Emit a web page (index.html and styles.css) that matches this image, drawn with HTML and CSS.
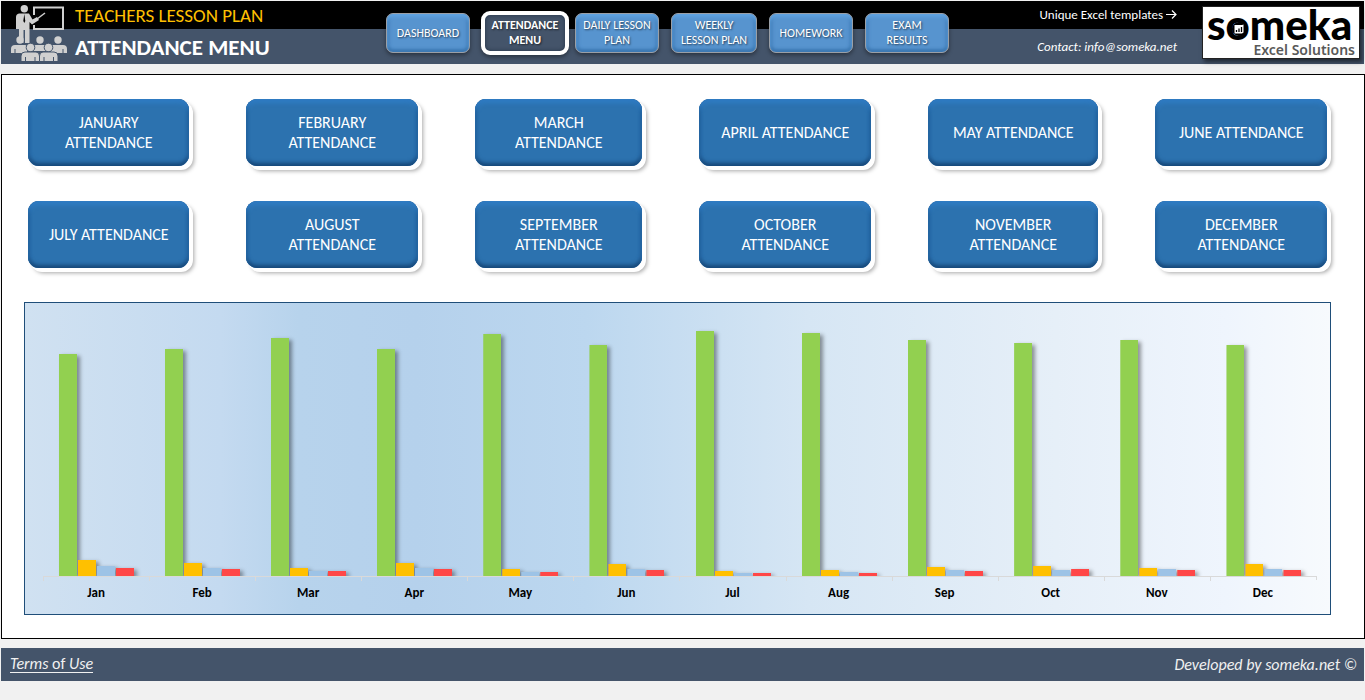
FILE: index.html
```html
<!DOCTYPE html>
<html lang="en">
  <head>
    <meta charset="UTF-8" />
    <title>Teachers Lesson Plan - Attendance Menu</title>
    <link rel="stylesheet" href="styles.css">
  </head>
  <body>
    <header class="header">
      <div class="brand">
        <svg class="brand-icon" viewBox="0 0 56 57" aria-hidden="true">
          <path d="M23 10V2.500H52V24H23V20" fill="none" stroke="#d0d0d0" stroke-width="2" />
          <path d="M26 14L34 8" stroke="#d0d0d0" stroke-width="1.500" />
          <circle cx="13.300" cy="3.700" r="3.700" />
          <path d="M8 8.500H18L21.500 14.500L26 12L28 15L21 19.500L18.500 17V38H14V25H12.500V38H8V24H5V12Q5 9 8 8.500Z" />
          <path d="M13.300 9L12.300 16L13.300 18L14.300 16Z" fill="#000" />
          <circle cx="9" cy="35" r="3.700" />
          <circle cx="29" cy="35" r="3.700" />
          <circle cx="47" cy="35" r="3.700" />
          <path d="M0 48V44Q0 40 4 40H14Q16 40 16 43V48Z" />
          <path d="M22 46V43Q22 40 25 40H33Q36 40 36 43V46Z" />
          <path d="M40 48V43Q40 40 42 40H52Q56 40 56 44V48Z" />
          <g stroke="#44546a" stroke-width="1">
            <circle cx="19.500" cy="42.500" r="4.300" />
            <circle cx="37.500" cy="42.500" r="4.300" />
            <path d="M10 56.500V51Q10 47 14 47H25Q28.500 47 28.500 51V56.500Z" />
            <path d="M28.500 56.500V51Q28.500 47 32 47H43Q47 47 47 51V56.500Z" />
            <path d="M14.500 52V56M24 52V56M33 52V56M42.500 52V56M4 44V48M52 44V48" />
          </g>
        </svg>
        <div class="titles">
          <div class="product">TEACHERS LESSON PLAN</div>
          <h1>ATTENDANCE MENU</h1>
        </div>
      </div>

      <nav class="nav">
        <a class="nav-button" href="#dashboard">DASHBOARD</a>
        <a class="nav-button active" href="#attendance">ATTENDANCE MENU</a>
        <a class="nav-button" href="#daily">DAILY LESSON PLAN</a>
        <a class="nav-button wide" href="#weekly">WEEKLY LESSON PLAN</a>
        <a class="nav-button" href="#homework">HOMEWORK</a>
        <a class="nav-button" href="#exams">EXAM RESULTS</a>
      </nav>

      <div class="contact">
        <a class="templates" href="#templates">Unique Excel templates
          <svg class="arrow" viewBox="0 0 11 9" aria-hidden="true"><path d="M0 4.500H10M6 .5L10 4.500L6 8.500" /></svg>
        </a>
        <a class="mail" href="#contact">Contact: info@someka.net</a>
      </div>

      <a class="logo" href="#someka">
        <span class="logo-name">s<span class="logo-o">o<svg viewBox="0 0 14 14" aria-hidden="true">
          <circle cx="7" cy="7" r="7" fill="#000" />
          <path d="M2.500 3H10L11.500 2.500V10.500L10 11.500H2.500Z" fill="#fff" />
          <path d="M4.500 10V8M7 10V6.500M9.500 10V5" stroke="#000" stroke-width="1.300" />
        </svg></span>meka</span>
        <span class="logo-sub">Excel Solutions</span>
      </a>
    </header>

    <main class="panel">
      <div class="months">
        <button class="month-button">JANUARY ATTENDANCE</button>
        <button class="month-button">FEBRUARY ATTENDANCE</button>
        <button class="month-button">MARCH ATTENDANCE</button>
        <button class="month-button">APRIL ATTENDANCE</button>
        <button class="month-button">MAY ATTENDANCE</button>
        <button class="month-button">JUNE ATTENDANCE</button>
        <button class="month-button">JULY ATTENDANCE</button>
        <button class="month-button">AUGUST ATTENDANCE</button>
        <button class="month-button">SEPTEMBER ATTENDANCE</button>
        <button class="month-button">OCTOBER ATTENDANCE</button>
        <button class="month-button">NOVEMBER ATTENDANCE</button>
        <button class="month-button">DECEMBER ATTENDANCE</button>
      </div>

      <div class="chart">
        <div class="plot">
          <div class="group"><i class="green" style="height: 222px"></i><i class="yellow" style="height: 16px"></i><i class="blue" style="height: 10px"></i><i class="red" style="height: 8px"></i></div>
          <div class="group"><i class="green" style="height: 227px"></i><i class="yellow" style="height: 13px"></i><i class="blue" style="height: 8px"></i><i class="red" style="height: 7px"></i></div>
          <div class="group"><i class="green" style="height: 238px"></i><i class="yellow" style="height: 8px"></i><i class="blue" style="height: 5px"></i><i class="red" style="height: 5px"></i></div>
          <div class="group"><i class="green" style="height: 227px"></i><i class="yellow" style="height: 13px"></i><i class="blue" style="height: 8px"></i><i class="red" style="height: 7px"></i></div>
          <div class="group"><i class="green" style="height: 242px"></i><i class="yellow" style="height: 7px"></i><i class="blue" style="height: 4px"></i><i class="red" style="height: 4px"></i></div>
          <div class="group"><i class="green" style="height: 231px"></i><i class="yellow" style="height: 12px"></i><i class="blue" style="height: 7px"></i><i class="red" style="height: 6px"></i></div>
          <div class="group"><i class="green" style="height: 245px"></i><i class="yellow" style="height: 5px"></i><i class="blue" style="height: 3px"></i><i class="red" style="height: 3px"></i></div>
          <div class="group"><i class="green" style="height: 243px"></i><i class="yellow" style="height: 6px"></i><i class="blue" style="height: 4px"></i><i class="red" style="height: 3px"></i></div>
          <div class="group"><i class="green" style="height: 236px"></i><i class="yellow" style="height: 9px"></i><i class="blue" style="height: 6px"></i><i class="red" style="height: 5px"></i></div>
          <div class="group"><i class="green" style="height: 233px"></i><i class="yellow" style="height: 10px"></i><i class="blue" style="height: 6px"></i><i class="red" style="height: 7px"></i></div>
          <div class="group"><i class="green" style="height: 236px"></i><i class="yellow" style="height: 8px"></i><i class="blue" style="height: 7px"></i><i class="red" style="height: 6px"></i></div>
          <div class="group"><i class="green" style="height: 231px"></i><i class="yellow" style="height: 12px"></i><i class="blue" style="height: 7px"></i><i class="red" style="height: 6px"></i></div>
        </div>
        <div class="labels">
          <span>Jan</span>
          <span>Feb</span>
          <span>Mar</span>
          <span>Apr</span>
          <span>May</span>
          <span>Jun</span>
          <span>Jul</span>
          <span>Aug</span>
          <span>Sep</span>
          <span>Oct</span>
          <span>Nov</span>
          <span>Dec</span>
        </div>
      </div>
    </main>

    <footer class="footer">
      <a class="terms" href="#terms"><em>Terms</em> of <em>Use</em></a>
      <em>Developed by someka.net ©</em>
    </footer>
  </body>
</html>
```

FILE: styles.css
```css
* {
  box-sizing: border-box;
}

body {
  margin: 0;
  padding: 1px 0 0 1px;
  background: #f1f1f1;
  font-family: Carlito, Lato, sans-serif;
}

a {
  color: white;
  text-decoration: none;
}

.header {
  display: flex;
  height: 63px;
  margin-right: 1px;
  background: linear-gradient(#000 28px, #44546a 28px);
}

.brand {
  display: flex;
  flex: 0 0 385px;
  padding: 4px 0 0 10px;
}

.brand-icon {
  width: 56px;
  height: 57px;
  fill: #d0d0d0;
}

.titles {
  margin-left: 8px;
  white-space: nowrap;
}

.product {
  color: #ffc000;
  font-size: 19px;
  line-height: 22px;
}

h1 {
  margin: 6px 0 0;
  color: white;
  font-size: 23px;
  line-height: 28px;
}

.nav {
  display: flex;
  align-items: flex-start;
  gap: 12px;
  padding-top: 12px;
}

.nav-button {
  display: flex;
  align-items: center;
  justify-content: center;
  width: 84px;
  height: 40px;
  padding: 0 6px;
  border: 1px solid #9a9fa6;
  border-radius: 7px;
  background: #5794cf;
  box-shadow: inset 0 3px 3px #5fa2e0, inset 0 -3px 3px #3d79b3,
    inset 3px 0 3px #4a86c0, inset -3px 0 3px #4a86c0,
    0 2px 4px rgba(0, 0, 0, 0.4);
  font-size: 12px;
  line-height: 15px;
  text-align: center;
  text-shadow: 1px 1px 2px rgba(0, 0, 0, 0.6);
}

.nav-button.wide {
  width: 86px;
}

.nav-button.active {
  width: 88px;
  height: 44px;
  margin: -2px -6px 0 -1px;
  padding: 0 4px;
  border: 4px solid white;
  border-radius: 9px;
  background: #44546a;
  box-shadow: inset 0 0 4px #263448, 0 2px 4px rgba(0, 0, 0, 0.4);
  font-weight: bold;
}

.contact {
  display: flex;
  flex-direction: column;
  align-items: flex-end;
  margin-left: auto;
  font-size: 13px;
  line-height: 28px;
  white-space: nowrap;
}

.mail {
  margin-top: 4px;
  font-style: italic;
}

.arrow {
  width: 11px;
  height: 9px;
  fill: none;
  stroke: white;
  stroke-width: 1.2;
}

.logo {
  display: flex;
  flex-direction: column;
  width: 158px;
  height: 53px;
  margin: 5px 4px 0 25px;
  padding: 0 4px;
  border: 1px solid #222;
  background: white;
  box-shadow: 2px 3px 4px rgba(0, 0, 0, 0.5);
  white-space: nowrap;
}

.logo-name {
  color: black;
  font-family: Lato, sans-serif;
  font-size: 42px;
  font-weight: 900;
  line-height: 34px;
}

.logo-o {
  position: relative;
}

.logo-o svg {
  position: absolute;
  bottom: 13px;
  left: 6px;
  width: 14px;
  height: 14px;
}

.logo-sub {
  color: #595959;
  font-family: "Noto Sans", sans-serif;
  font-size: 14px;
  font-weight: 600;
  line-height: 17px;
  text-align: right;
}

.panel {
  margin-top: 10px;
  padding: 24px 33px 23px 22px;
  border: 1px solid black;
  background: white;
}

.months {
  display: grid;
  grid-template-columns: 161fr 171fr 167fr 171fr 170fr 171fr;
  gap: 35px 57px;
  margin: 0 4px 34px 4px;
}

.month-button {
  height: 67px;
  padding: 0 18px;
  border: 0;
  border-radius: 11px;
  background: #2c72af;
  box-shadow: inset 0 4px 4px #2f7cc4, inset 0 -3px 4px #174878,
    inset 1px 0 3px #20598f, inset -1px 0 3px #20598f, 3px 3px 0 1px white,
    5px 5px 4px rgba(0, 0, 0, 0.35);
  color: white;
  font-family: inherit;
  font-size: 16px;
  line-height: 20px;
  cursor: pointer;
}

.chart {
  padding: 0 13px 5px 18px;
  border: 1px solid #1f4e79;
  background: linear-gradient(
    to right,
    #d0e1f1,
    #c4daf0 15%,
    #b7d3ec 21%,
    #b5d1ec 30%,
    #bcd7ef 43%,
    #d6e6f4 60%,
    #e6eff8 79%,
    #eff5fd 92%,
    #f7fafd
  );
}

.plot {
  display: flex;
  height: 274px;
  border-bottom: 1px solid #d9d9d9;
}

.group {
  display: flex;
  flex: 1;
  align-items: flex-end;
  justify-content: center;
  gap: 1px;
}

.group i {
  width: 18px;
  box-shadow: 3px 2px 4px rgba(0, 0, 0, 0.4);
  clip-path: inset(-6px -9px 0 0);
}

.green {
  background: #92d050;
}

.yellow {
  background: #ffc000;
}

.blue {
  background: #9dc3e6;
}

.red {
  background: #ff4747;
}

.labels {
  display: flex;
  font-size: 13px;
  font-weight: bold;
  line-height: 32px;
  text-align: center;
}

.labels span {
  flex: 1;
  background: linear-gradient(#d9d9d9, #d9d9d9) no-repeat left top / 1px 4px;
}

.labels span:last-child {
  border-right: 1px solid;
  border-image: linear-gradient(#d9d9d9 4px, transparent 4px) 1;
}

.footer {
  display: flex;
  align-items: center;
  justify-content: space-between;
  height: 33px;
  margin: 9px 1px 0 0;
  padding: 0 7px 0 9px;
  background: #44546a;
  color: #f1f1f1;
  font-size: 16px;
}

.terms {
  border-bottom: 1px solid #f1f1f1;
  color: #f1f1f1;
  line-height: 16px;
}
```
